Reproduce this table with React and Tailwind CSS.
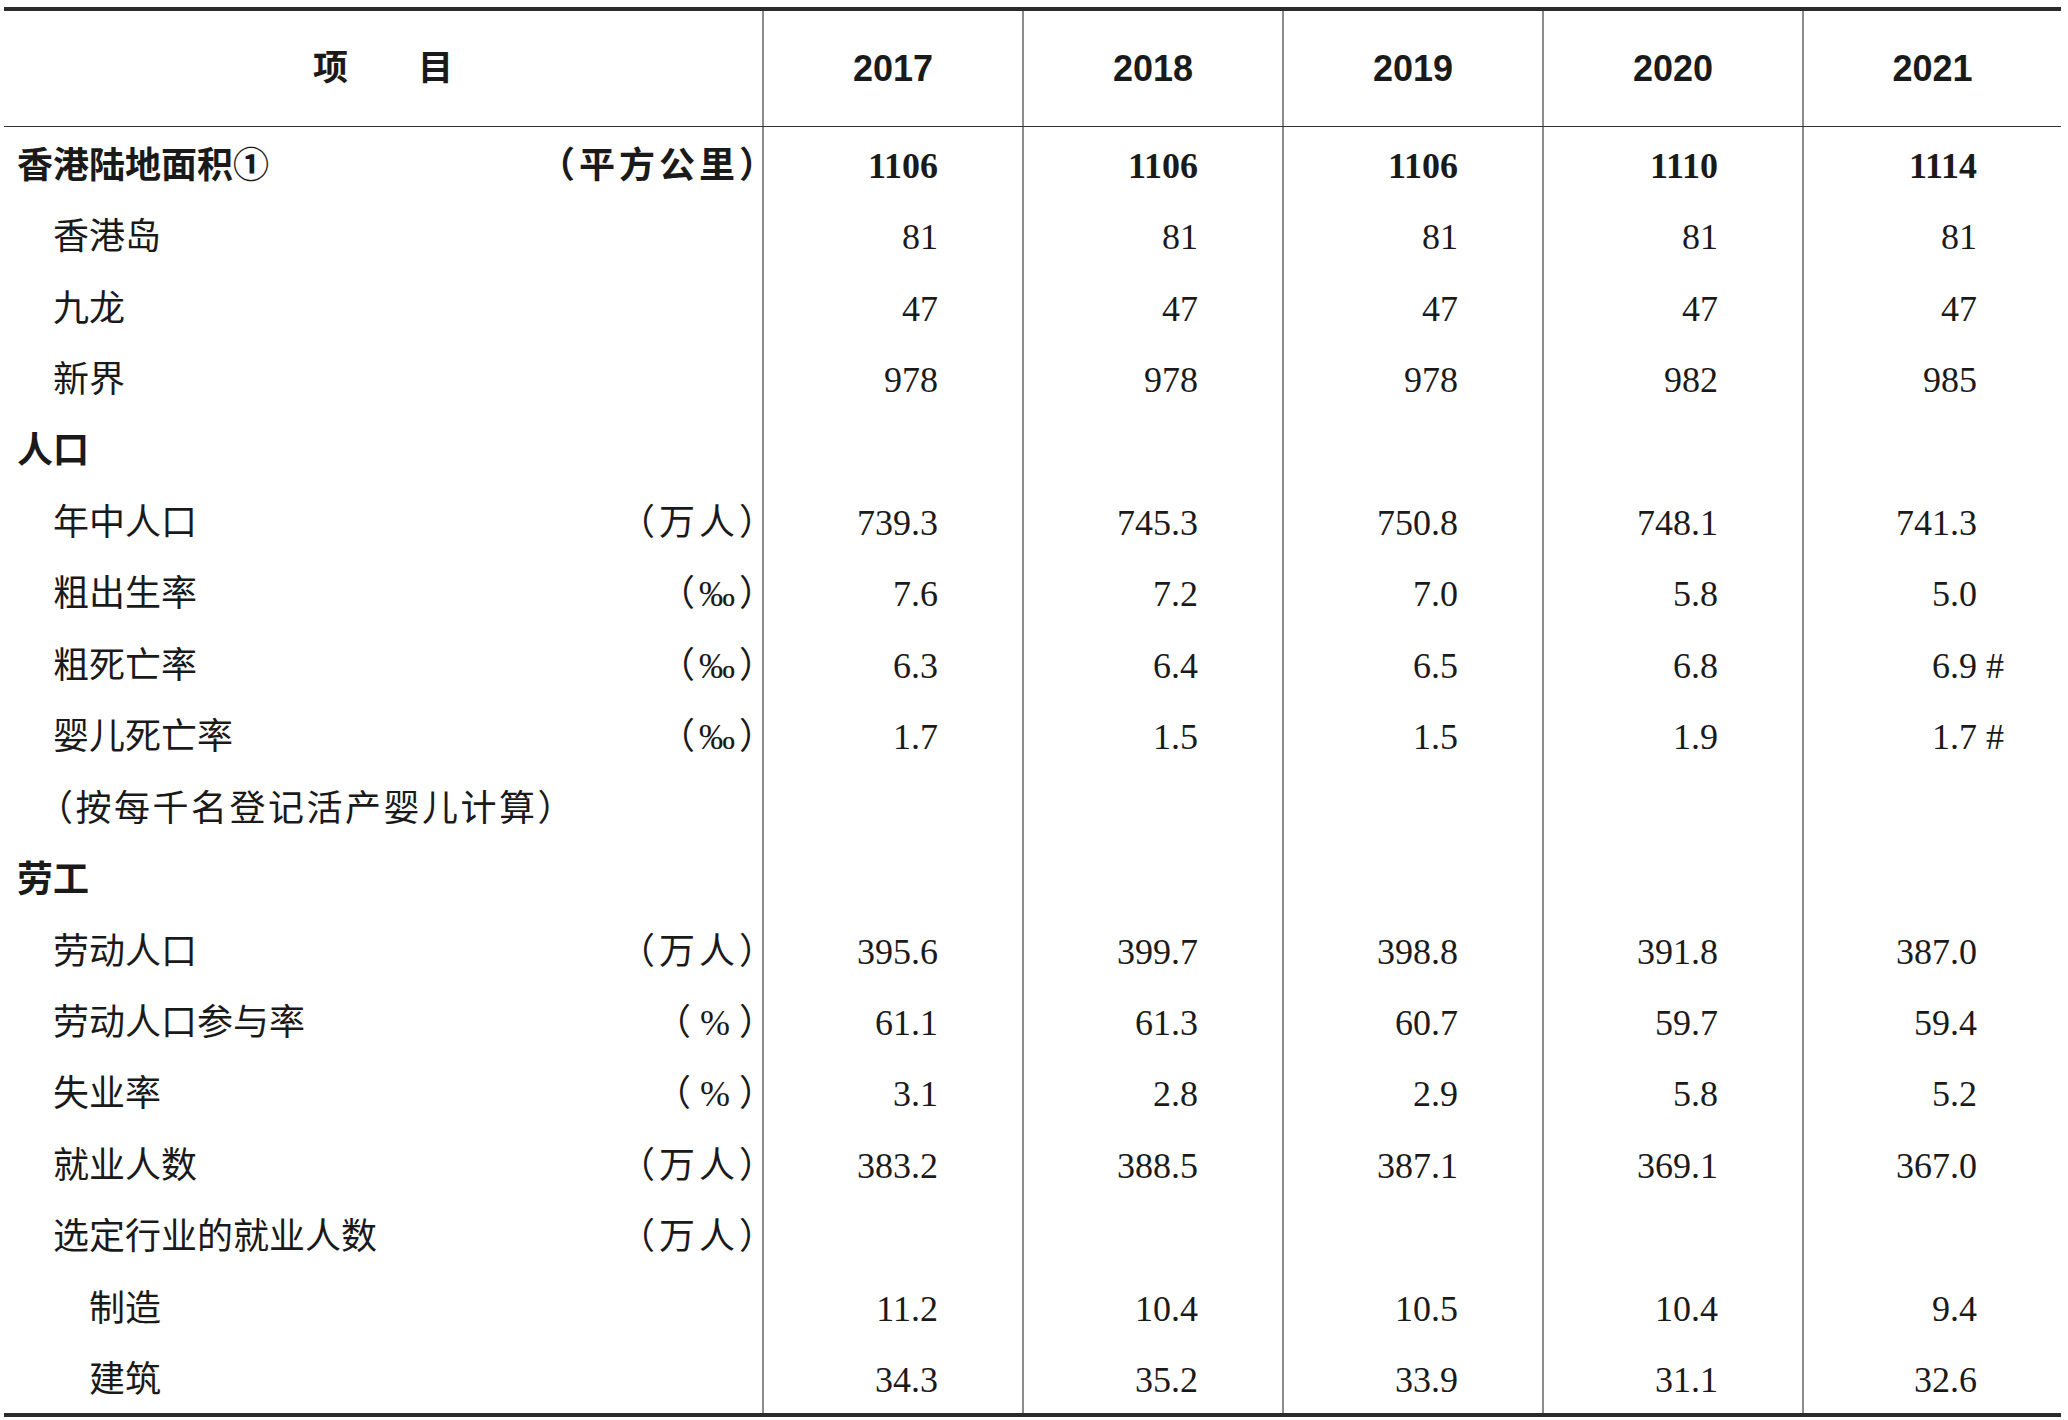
import React from 'react';

/* ── 表头年份 ── */
const YEARS = ['2017', '2018', '2019', '2020', '2021'];

/* ── 表体数据（level 为缩进层级） ── */
const ROWS = [
  { label: '香港陆地面积①', unit: '（平方公里）', level: 0, bold: true, values: ['1106', '1106', '1106', '1110', '1114'] },
  { label: '香港岛', level: 1, values: ['81', '81', '81', '81', '81'] },
  { label: '九龙', level: 1, values: ['47', '47', '47', '47', '47'] },
  { label: '新界', level: 1, values: ['978', '978', '978', '982', '985'] },
  { label: '人口', level: 0, bold: true },
  { label: '年中人口', unit: '（万人）', level: 1, values: ['739.3', '745.3', '750.8', '748.1', '741.3'] },
  { label: '粗出生率', unit: '（‰）', level: 1, values: ['7.6', '7.2', '7.0', '5.8', '5.0'] },
  { label: '粗死亡率', unit: '（‰）', level: 1, values: ['6.3', '6.4', '6.5', '6.8', '6.9 #'] },
  { label: '婴儿死亡率', unit: '（‰）', level: 1, values: ['1.7', '1.5', '1.5', '1.9', '1.7 #'] },
  { label: '（按每千名登记活产婴儿计算）', level: 1, note: true },
  { label: '劳工', level: 0, bold: true },
  { label: '劳动人口', unit: '（万人）', level: 1, values: ['395.6', '399.7', '398.8', '391.8', '387.0'] },
  { label: '劳动人口参与率', unit: '（ % ）', level: 1, values: ['61.1', '61.3', '60.7', '59.7', '59.4'] },
  { label: '失业率', unit: '（ % ）', level: 1, values: ['3.1', '2.8', '2.9', '5.8', '5.2'] },
  { label: '就业人数', unit: '（万人）', level: 1, values: ['383.2', '388.5', '387.1', '369.1', '367.0'] },
  { label: '选定行业的就业人数', unit: '（万人）', level: 1 },
  { label: '制造', level: 2, values: ['11.2', '10.4', '10.5', '10.4', '9.4'] },
  { label: '建筑', level: 2, values: ['34.3', '35.2', '33.9', '31.1', '32.6'] },
];

const GRID = 'grid grid-cols-[758px_260px_260px_260px_260px_259px]';
const INDENT = ['pl-[13px]', 'pl-[49px]', 'pl-[85px]'];

export default function App() {
  return (
    <div className="w-[2068px] h-[1420px] bg-white pt-[7px] pl-[4px] text-[#1a1a1a] font-['Liberation_Serif','Noto_Sans_CJK_SC',serif]">
      <div className="w-[2057px] border-t-4 border-b-4 border-[#2b2b2b]">
        {/* ── Header ── */}
        <div className={`${GRID} h-[116px] border-b border-[#333]`}>
          <div className="flex items-center justify-center text-[35px] font-bold font-['Liberation_Sans','Noto_Sans_CJK_SC',sans-serif]">
            项　　目
          </div>
          {YEARS.map((y) => (
            <div
              key={y}
              className="flex items-center justify-center border-l-2 border-[#8c8c8c] text-[36px] font-bold font-['Liberation_Sans',sans-serif]"
            >
              {y}
            </div>
          ))}
        </div>

        {/* ── Body rows ── */}
        {ROWS.map((row, i) => (
          <div key={i} className={`${GRID} h-[71.45px]`}>
            <div
              className={`flex items-center justify-between pt-[6px] pr-[5px] text-[36px] ${INDENT[row.level]} ${
                row.bold ? 'font-bold' : 'font-normal'
              }`}
            >
              <span className={`whitespace-nowrap ${row.note ? 'tracking-[2.5px] -ml-[16px]' : ''}`}>
                {row.label}
              </span>
              {row.unit && (
                <span
                  className={`whitespace-nowrap [font-feature-settings:'halt'] ${
                    row.unit.includes('%') ? '' : 'tracking-[4px] -mr-[4px]'
                  }`}
                >
                  {row.unit}
                </span>
              )}
            </div>
            {YEARS.map((y, j) => {
              const raw = row.values ? row.values[j] : '';
              const [num, mark] = raw.split(' ');
              return (
                <div
                  key={y}
                  className={`flex items-center justify-end pt-[6px] border-l-2 border-[#8c8c8c] text-[36px] ${
                    row.bold ? 'font-bold' : 'font-normal'
                  }`}
                >
                  <span>{num}</span>
                  <span className="w-[84px] pl-[9px] text-left">{mark}</span>
                </div>
              );
            })}
          </div>
        ))}
      </div>
    </div>
  );
}
